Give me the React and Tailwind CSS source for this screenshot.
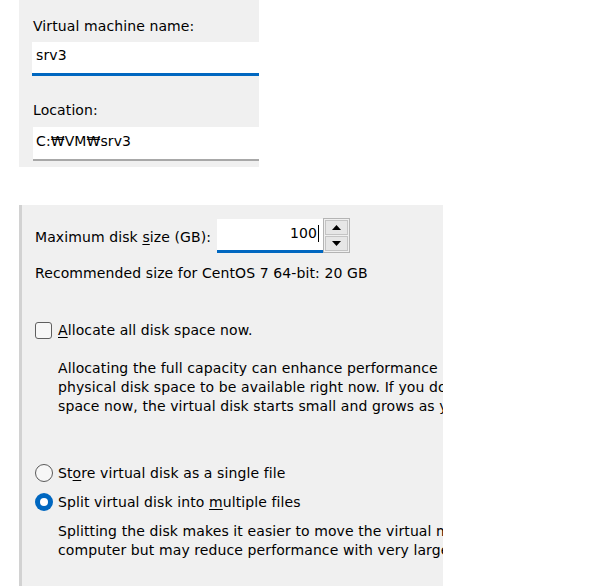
import React from 'react'

const font = { fontFamily: '"DejaVu Sans", Tahoma, sans-serif' }

function Arrow({ down }) {
  return (
    <svg width="9" height="5" viewBox="0 0 9 5" className="block">
      {down ? <path d="M0 0h9L4.5 5z" fill="#000" /> : <path d="M0 5h9L4.5 0z" fill="#000" />}
    </svg>
  )
}

export default function App() {
  return (
    <div className="min-h-[586px] bg-white text-[14px] leading-[17px] tracking-[0.1px] text-black" style={font}>
      {/* name + location */}
      <div className="ml-[19px] w-[240px] h-[167px] bg-[#f0f0f0] pt-[18px] pl-[14px]">
        <div>Virtual machine name:</div>
        <div className="mt-[7px] -ml-[1px] h-[34px] bg-white border-b-[3px] border-[#0067c0] pl-[4px] pt-[5px]">srv3</div>
        <div className="mt-[26px]">Location:</div>
        <div className="mt-[8px] h-[34px] bg-white border-b-2 border-[#a8a8a8] pl-[3px] pt-[6px]">C:₩VM₩srv3</div>
      </div>

      {/* disk panel */}
      <div className="mt-[38px] ml-[19px] w-[424px] h-[381px] bg-[#f0f0f0] border-l-[3px] border-[#d2d2d2] overflow-hidden pt-[13px] pl-[13px]">
        <div className="flex items-start">
          <div className="w-[182px] mt-[11px] whitespace-nowrap">
            Maximum disk <u className="underline-offset-2">s</u>ize (GB):
          </div>
          <div className="mt-[1px] w-[106px] h-[34px] bg-white border-b-[3px] border-[#0067c0] flex justify-end items-start pt-[6px] pr-[4px]">
            <span>100</span>
            <span className="w-px h-[17px] bg-black ml-px" />
          </div>
          <div className="w-[27px] h-[35px] border border-[#b4b4b4] bg-[#f0f0f0] p-[1px] flex flex-col gap-[1px]">
            <div className="flex-1 bg-[#e6e6e6] border border-[#c4c4c4] flex items-center justify-center">
              <Arrow />
            </div>
            <div className="flex-1 bg-[#e6e6e6] border border-[#c4c4c4] flex items-center justify-center">
              <Arrow down />
            </div>
          </div>
        </div>

        <div className="mt-[12px] whitespace-nowrap">Recommended size for CentOS 7 64-bit: 20 GB</div>

        <div className="mt-[40px] flex items-center">
          <div className="w-[17px] h-[17px] rounded-[3px] border border-[#5f5f5f] bg-[#f7f7f7]" />
          <div className="ml-[6px] whitespace-nowrap">
            <u className="underline-offset-2">A</u>llocate all disk space now.
          </div>
        </div>

        <div className="mt-[20px] ml-[23px] leading-[19px] whitespace-nowrap">
          <div>Allocating the full capacity can enhance performance but requires all of the</div>
          <div>physical disk space to be available right now. If you do not allocate all the</div>
          <div>space now, the virtual disk starts small and grows as you add data to it.</div>
        </div>

        <div className="mt-[48px] h-[18px] flex items-center">
          <div className="w-[18px] h-[18px] rounded-full border border-[#5a5a5a] bg-[#f7f7f7]" />
          <div className="ml-[5px] whitespace-nowrap">
            St<u className="underline-offset-2">o</u>re virtual disk as a single file
          </div>
        </div>

        <div className="mt-[11px] h-[18px] flex items-center">
          <div className="w-[18px] h-[18px] rounded-full bg-[#0067c0] flex items-center justify-center">
            <div className="w-[8px] h-[8px] rounded-full bg-white" />
          </div>
          <div className="ml-[5px] whitespace-nowrap">
            Split virtual disk into <u className="underline-offset-2">m</u>ultiple files
          </div>
        </div>

        <div className="mt-[11px] ml-[23px] leading-[19px] whitespace-nowrap">
          <div>Splitting the disk makes it easier to move the virtual machine to another</div>
          <div>computer but may reduce performance with very large disks.</div>
        </div>
      </div>
    </div>
  )
}
